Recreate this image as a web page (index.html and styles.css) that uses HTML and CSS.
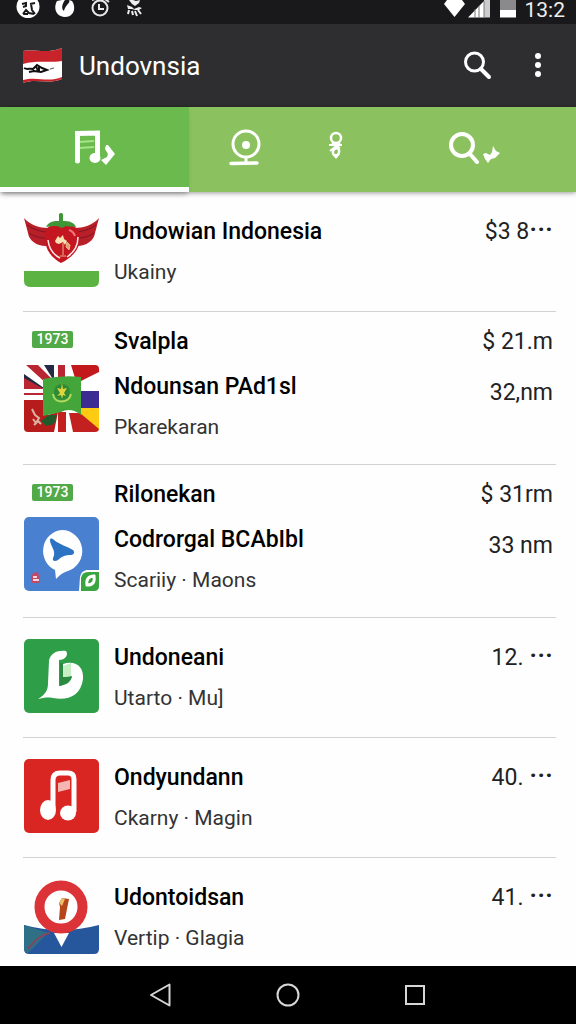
FILE: index.html
```html
<!DOCTYPE html>
<html lang="en">
<head>
    <meta charset="UTF-8">
    <meta name="viewport" content="width=device-width, initial-scale=1.0">
    <title>Undovnsia</title>
    <link rel="stylesheet" href="styles.css">
</head>
<body>

<!-- Status bar -->
<div class="status-bar">
    <svg width="24" height="24" viewBox="0 0 24 24">
        <circle cx="12" cy="6.500" r="11.500" fill="#fff"/>
        <path d="M6 4l4-1v3l-3 1M14 4l5-1M15 4l1 6 3 4M7 14l3-4 3 3 5 1M7 14h5" fill="none" stroke="#19191b" stroke-width="2"/>
    </svg>
    <svg width="20" height="24" viewBox="0 0 20 24">
        <path d="M2 1C-2 8 1 17 10 17c10 0 11-11 7-16L14 0c2 3-4 5-5 11C6 9 7 4 10 0H7z" fill="#fff"/>
    </svg>
    <svg width="20" height="24" viewBox="0 0 20 24">
        <circle cx="10" cy="8" r="7.500" fill="none" stroke="#e8e8e8" stroke-width="2"/>
        <path d="M9 4v5h5M2 0l3-1M15-1l4 3" fill="none" stroke="#e8e8e8" stroke-width="2"/>
    </svg>
    <svg width="18" height="24" viewBox="0 0 18 24">
        <path d="M4 0l3 4 3 2 4-3 1-3-4 1-3-1zM2 5l5 2 2 2 5-2 3 1-3 2-4 0-3-1-4 0z" fill="#eee"/>
        <path d="M4 10l-1 4M7 11l1 4M10 11l2 5M13 10l3 4" stroke="#eee" stroke-width="2"/>
    </svg>
    <div class="status-right">
        <svg width="48" height="24" viewBox="0 0 48 24">
            <path d="M1 4L4 0h15l3 4-10.500 13z" fill="#fff"/>
            <path d="M25 17.500L41 1v16.500z" fill="#fff"/>
            <path d="M41 0h6v17.500h-6z" fill="#ccc"/>
            <path d="M32 9v9M36 6v12M41 1v17" stroke="#777" stroke-width="1"/>
        </svg>
        <svg width="16" height="24" viewBox="0 0 16 24">
            <path d="M0 0h16v10H0z" fill="#8a8a8c"/>
            <path d="M0 10h16v7.500H0z" fill="#fff"/>
        </svg>
        <span class="clock">13:2</span>
    </div>
</div>

<!-- App bar -->
<header class="app-bar">
    <svg width="40" height="38" viewBox="0 0 40 38">
        <path d="M0 4c12-2 24 3 39-3v31c-14 6-26-1-39 4z" fill="#fff"/>
        <path d="M0 4c12-2 24 3 39-3v13c-15 2-26-1-39 3z" fill="#c8232a"/>
        <path d="M0 33c14-4 25 3 39-3v2c-14 6-26-1-39 4z" fill="#c8232a"/>
        <path d="M1 21c3 2 6 0 9 1l4-4 5 3 5 2-6 2-7-1-5 1M13 19l2 5M16 20v4" fill="none" stroke="#111" stroke-width="2"/>
        <path d="M27 22l4-1" stroke="#555"/>
    </svg>
    <h1>Undovnsia</h1>
    <button type="button" class="icon-button" aria-label="Search">
        <svg width="28" height="30" viewBox="0 0 28 30">
            <circle cx="10.500" cy="11" r="9" fill="none" stroke="#fff" stroke-width="3"/>
            <path d="M17 18l8 8" stroke="#fff" stroke-width="4" stroke-linecap="round"/>
        </svg>
    </button>
    <button type="button" class="icon-button" aria-label="More options">
        <svg width="12" height="30" viewBox="0 0 12 30">
            <g fill="#fff">
                <circle cx="6" cy="5" r="3"/>
                <circle cx="6" cy="14" r="3"/>
                <circle cx="6" cy="23" r="3"/>
            </g>
        </svg>
    </button>
</header>

<!-- Tabs -->
<nav class="tabs">
    <button type="button" class="tab active" aria-label="Music">
        <svg width="42" height="38" viewBox="0 0 42 38">
            <path d="M5 14l15-1M5 20l15-1" stroke="#a5e487" stroke-width="2"/>
            <path d="M3.500 33V5.500l20-.5v24" fill="none" stroke="#fff" stroke-width="5" stroke-linecap="round"/>
            <ellipse cx="21" cy="30" rx="5.500" ry="5" fill="#fff"/>
            <path d="M32 17h2l7 9-9 11-5-5 6-3 1-3-3-5z" fill="#fff"/>
        </svg>
    </button>
    <button type="button" class="tab" aria-label="Camera">
        <svg width="32" height="38" viewBox="0 0 32 38">
            <circle cx="17" cy="16" r="13" fill="none" stroke="#fff" stroke-width="3"/>
            <circle cx="17" cy="17" r="4" fill="#fff"/>
            <path d="M17 29v6" stroke="#fff" stroke-width="3"/>
            <path d="M2 35.500l26-.5" stroke="#fff" stroke-width="3.500" stroke-linecap="round"/>
        </svg>
    </button>
    <button type="button" class="tab" aria-label="Places">
        <svg width="16" height="32" viewBox="0 0 16 32">
            <circle cx="8" cy="7" r="5" fill="none" stroke="#fff" stroke-width="2.500"/>
            <path d="M1 14h13M12 12l-10 8M4 12l8 5" stroke="#fff" stroke-width="2"/>
            <path d="M5 20c1-3 5-4 6-1 1 3-2 6-3 6s-4-2-3-5z" fill="none" stroke="#fff" stroke-width="2.500"/>
            <path d="M4 23h8l-4 5z" fill="#fff"/>
        </svg>
    </button>
    <button type="button" class="tab" aria-label="Find">
        <svg width="52" height="34" viewBox="0 0 52 34">
            <circle cx="14" cy="15" r="11" fill="none" stroke="#fff" stroke-width="4"/>
            <path d="M22 24l7 8" stroke="#fff" stroke-width="4" stroke-linecap="round"/>
            <path d="M45 16l3 5 4 2-5 5-4 1-3 4-3-4-2-5 3-1 4 2 2-3z" fill="#fff"/>
        </svg>
    </button>
</nav>

<main>
<ul class="app-list">
    <li class="app">
        <div class="thumb">
            <svg width="75" height="75" viewBox="0 0 75 75">
                <path d="M0 58h75v10q0 6-7 6H7q-7 0-7-6z" fill="#5bb442"/>
                <path d="M0 5c6 7 16 10 24 10v18C14 34 5 28 4 20z" fill="#b81f29"/>
                <path d="M75 5c-6 7-16 10-24 10v18c10 1 19-5 20-13z" fill="#b81f29"/>
                <path d="M3 12c7 5 13 6 19 7M5 20c6 4 11 5 17 5M72 12c-7 5-13 6-19 7M70 20c-6 4-11 5-17 5" stroke="#7e1522" fill="none"/>
                <path d="M26 13h23c5 2 7 6 7 12 0 12-9 20-19 25-9-5-16-13-16-25 0-6 1-10 5-12z" fill="#c31620"/>
                <path d="M24 27c1 9 6 15 12 18M54 24c0 9-5 16-11 20" fill="none" stroke="#ffe9e9" stroke-width="1.500"/>
                <path d="M45 17c3 1 5 3 6 6" fill="none" stroke="#f27a7a" stroke-width="2"/>
                <path d="M31 28l3-5 2 2 3-3 1 4 3 2-2 4-2-3-4 2-3-1z" fill="#f8e2b4"/>
                <path d="M39 30v12M36 43h6M43 29l3 3-1 5-3-3z" fill="#e9a06a" stroke="#e9b58a"/>
                <path d="M22 14c3-6 9-6 13-6V1q2-2 4 0v7c6 0 11 1 13 6-5-1-7 0-10-1l-4 2-5-2c-4 0-7 0-11 1z" fill="#3f9636"/>
            </svg>
        </div>
        <div class="info">
            <p class="name">Undowian Indonesia</p>
            <p class="detail">Ukainy</p>
        </div>
        <div class="prices">
            <p>$3 8<span class="dots">···</span></p>
        </div>
    </li>

    <li class="app double">
        <div class="thumb">
            <span class="badge">1973</span>
            <svg width="75" height="75" viewBox="0 0 75 75">
                <clipPath id="flag-clip"><rect y="1" width="75" height="67" rx="4"/></clipPath>
                <g clip-path="url(#flag-clip)">
                    <path d="M0 1h75v67H0z" fill="#fff"/>
                    <path d="M0 10l20 14H0zM20 1h10v16z" fill="#252a44"/>
                    <path d="M2 1h12l14 14-5 5zM34 1h7v16h-7zM0 14l20 11H0zM0 29h20v2H0z" fill="#b92631"/>
                    <path d="M47 1h28v7L51 20V14z" fill="#c3181c"/>
                    <path d="M56 27h19v17H56z" fill="#3a2c91"/>
                    <path d="M56 44h19v24L56 49z" fill="#fdcb12"/>
                    <path d="M0 36h20l4 15 10-3-4 20H0z" fill="#b71c1c"/>
                    <path d="M34 48h8v20H34zM45 49h11l19 16v3H49z" fill="#c3211f"/>
                    <path d="M8 45l3 6 4 3-3 5-3-4M10 61l4-4 3 3" fill="none" stroke="#ddb1a0" stroke-width="2"/>
                    <path d="M17 57l8-6h8l-3 9-8 2z" fill="#205a2a"/>
                    <path d="M19 15q19-4 38-2v38q-10-8-20-3l-18 4z" fill="#44a53b"/>
                    <circle cx="38" cy="28" r="8" fill="#2f8a35"/>
                    <path d="M29 30c1 10 16 10 18 0" fill="none" stroke="#b2d95c" stroke-width="2"/>
                    <path d="M38 19l1 6 4-1-3 5 2 3-3-1-1 4-1-4-4 1 3-3-3-5 4 1z" fill="#e0d53a"/>
                </g>
            </svg>
        </div>
        <div class="info">
            <p class="name first">Svalpla</p>
            <p class="name">Ndounsan PAd1sl</p>
            <p class="detail">Pkarekaran</p>
        </div>
        <div class="prices">
            <p>$ 21.m</p>
            <p>32,nm</p>
        </div>
    </li>

    <li class="app double">
        <div class="thumb">
            <span class="badge">1973</span>
            <svg width="75" height="75" viewBox="0 0 75 75">
                <rect width="75" height="74" rx="5" fill="#4a80d0"/>
                <path d="M38 13a20.500 21 0 0 1 6 41c-4 1-7 3-12 8l-1-9A20.500 21 0 0 1 38 13z" fill="#fff"/>
                <path d="M26 23c0-2 2-2 4 0 6 5 13 6 19 10 2 2 1 5-2 5-5 0-9 1-13 5-3 2-6 1-5-2 4-7-3-12-3-18z" fill="#2d73c3"/>
                <path d="M9 56l5-1 2 8-1 3-7 0-1-5z" fill="#c34864"/>
                <path d="M9 60h4M9 63h6" stroke="#f3d8e4" stroke-width="2"/>
                <path d="M55 74l1-14q1-6 7-7h12v16q0 5-5 5z" fill="#fff"/>
                <path d="M57 74V61q1-6 7-6h11v14q0 5-5 5z" fill="#3aa440"/>
                <path d="M70 59c-5 0-8 3-7 9 6 0 8-3 7-9z" fill="none" stroke="#fff" stroke-width="3"/>
            </svg>
        </div>
        <div class="info">
            <p class="name first">Rilonekan</p>
            <p class="name">Codrorgal BCAbIbl</p>
            <p class="detail">Scariiy · Maons</p>
        </div>
        <div class="prices">
            <p>$ 31rm</p>
            <p>33 nm</p>
        </div>
    </li>

    <li class="app">
        <div class="thumb">
            <svg width="75" height="75" viewBox="0 0 75 75">
                <rect width="75" height="74" rx="5" fill="#2f9e49"/>
                <path d="M25 22c1-8 9-11 17-10 3 4-1 9-7 9v26c8-1 12-4 13-10l-9 1V25c13-4 21 3 20 15-2 17-16 22-30 19-6-1-10 0-15 1 8-5 10-9 10-16z" fill="#fff"/>
                <path d="M39 27l8-3v13l-8 1z" fill="#c6efc5"/>
                <path d="M36 24h3v14h9c-2 4-6 7-12 9z" fill="#2b8a41"/>
            </svg>
        </div>
        <div class="info">
            <p class="name">Undoneani</p>
            <p class="detail">Utarto · Mu]</p>
        </div>
        <div class="prices">
            <p>12. <span class="dots">···</span></p>
        </div>
    </li>

    <li class="app">
        <div class="thumb">
            <svg width="75" height="75" viewBox="0 0 75 75">
                <rect width="75" height="74" rx="5" fill="#d92623"/>
                <path d="M34 24l12-3v9l-12 3z" fill="#f5b5b0"/>
                <path d="M29 50V21q0-7 7-7h8q6 0 6 6v33" fill="none" stroke="#fff" stroke-width="5"/>
                <ellipse cx="24" cy="51" rx="8" ry="10" fill="#fff"/>
                <ellipse cx="44" cy="54" rx="8" ry="7.500" fill="#fff"/>
            </svg>
        </div>
        <div class="info">
            <p class="name">Ondyundann</p>
            <p class="detail">Ckarny · Magin</p>
        </div>
        <div class="prices">
            <p>40. <span class="dots">···</span></p>
        </div>
    </li>

    <li class="app">
        <div class="thumb">
            <svg width="75" height="75" viewBox="0 0 75 75">
                <path d="M0 46q37 10 75 0v24q0 5-5 5H5q-5 0-5-5z" fill="#26579c"/>
                <path d="M0 46l24 8L4 74q-4-1-4-5z" fill="#2e7187"/>
                <path d="M4 70q10-14 22-16" fill="none" stroke="#814661" stroke-width="2"/>
                <path d="M30 54h15l-7.500 14z" fill="#fff"/>
                <circle cx="37" cy="28" r="21.500" fill="#fff" stroke="#dc3338" stroke-width="10"/>
                <path d="M35 24l3-5 7 1-4 20-6 1 1-13z" fill="#b54619"/>
                <path d="M35 24l3-5 3 1-3 7z" fill="#eebd68"/>
            </svg>
        </div>
        <div class="info">
            <p class="name">Udontoidsan</p>
            <p class="detail">Vertip · Glagia</p>
        </div>
        <div class="prices">
            <p>41. <span class="dots">···</span></p>
        </div>
    </li>
</ul>
</main>

<!-- System navigation -->
<footer class="nav-bar">
    <button type="button" class="icon-button" aria-label="Back">
        <svg width="24" height="24" viewBox="0 0 24 24">
            <path d="M20.500 1.500v21L2 12z" fill="none" stroke="#d6d6d6" stroke-width="2" stroke-linejoin="round"/>
        </svg>
    </button>
    <button type="button" class="icon-button" aria-label="Home">
        <svg width="24" height="24" viewBox="0 0 24 24">
            <circle cx="12" cy="12" r="10.500" fill="none" stroke="#d6d6d6" stroke-width="2"/>
        </svg>
    </button>
    <button type="button" class="icon-button" aria-label="Recent apps">
        <svg width="24" height="24" viewBox="0 0 24 24">
            <rect x="3" y="3" width="18" height="18" fill="none" stroke="#d6d6d6" stroke-width="2"/>
        </svg>
    </button>
</footer>

</body>
</html>
```

FILE: styles.css
```css
* {
    box-sizing: border-box;
}
body {
    font-family: Roboto, "Liberation Sans", sans-serif;
    background-color: #fefefe;
    color: #222;
    display: flex;
    flex-direction: column;
    min-height: 100vh;
    margin: 0;
}
svg {
    display: block;
}
p, h1, ul {
    margin: 0;
    padding: 0;
}
button {
    background: none;
    border: none;
    padding: 0;
    cursor: pointer;
}
.status-bar {
    display: flex;
    gap: 15px;
    height: 24px;
    padding: 0 11px 0 16px;
    background-color: #19191b;
}
.status-right {
    display: flex;
    gap: 9px;
    margin-left: auto;
}
.clock {
    color: #eee;
    font-size: 21px;
    line-height: 21px;
}
.app-bar {
    display: flex;
    align-items: center;
    gap: 16px;
    height: 83px;
    padding: 0 32px 0 23px;
    background-color: #2e2e30;
}
.app-bar h1 {
    flex: 1;
    color: #fff;
    font-size: 26px;
    font-weight: 400;
}
.app-bar .icon-button + .icon-button {
    margin-left: 24px;
}
.icon-button {
    display: flex;
    align-items: center;
    justify-content: center;
}
.tabs {
    display: grid;
    grid-template-columns: 189fr 112fr 70fr 205fr;
    height: 85px;
    background-color: #8bc25f;
    box-shadow: 0 1px 5px rgba(0, 0, 0, 0.4);
}
.tab {
    display: flex;
    align-items: center;
    justify-content: center;
    border-bottom: 5px solid transparent;
}
.tab.active {
    background-color: #6aba4e;
    border-bottom-color: #fff;
    box-shadow: 0 4px 5px -2px rgba(0, 0, 0, 0.25);
}
main {
    flex: 1;
}
.app-list {
    list-style: none;
    padding: 0 20px 0 23px;
}
.app {
    display: flex;
    padding: 20px 3px 19px 0;
    border-bottom: 1px solid #d2d2d2;
}
.app:last-child {
    padding-bottom: 8px;
    border-bottom: none;
}
.app.double {
    padding-top: 10px;
    padding-bottom: 17px;
}
.thumb {
    width: 76px;
    margin-right: 15px;
    padding-top: 1px;
    padding-left: 1px;
}
.badge {
    display: block;
    width: 41px;
    margin: 8px 0 16px 8px;
    border-radius: 2px;
    background-color: #52a947;
    color: #fff;
    font-size: 14px;
    font-weight: 500;
    line-height: 17px;
    text-align: center;
}
.info {
    flex: 1;
}
.name {
    color: #000;
    font-size: 23px;
    font-weight: 500;
    line-height: 40px;
}
.name.first {
    margin-bottom: 5px;
}
.detail {
    color: #333;
    font-size: 21px;
    line-height: 40px;
}
.prices {
    font-size: 23px;
    line-height: 40px;
    text-align: right;
}
.prices p + p {
    margin-top: 11px;
}
.dots {
    font-size: 28px;
    font-weight: 500;
    line-height: 20px;
}
.nav-bar {
    display: grid;
    grid-template-columns: repeat(3, 22%);
    justify-content: center;
    height: 58px;
    background-color: #000;
}
```
